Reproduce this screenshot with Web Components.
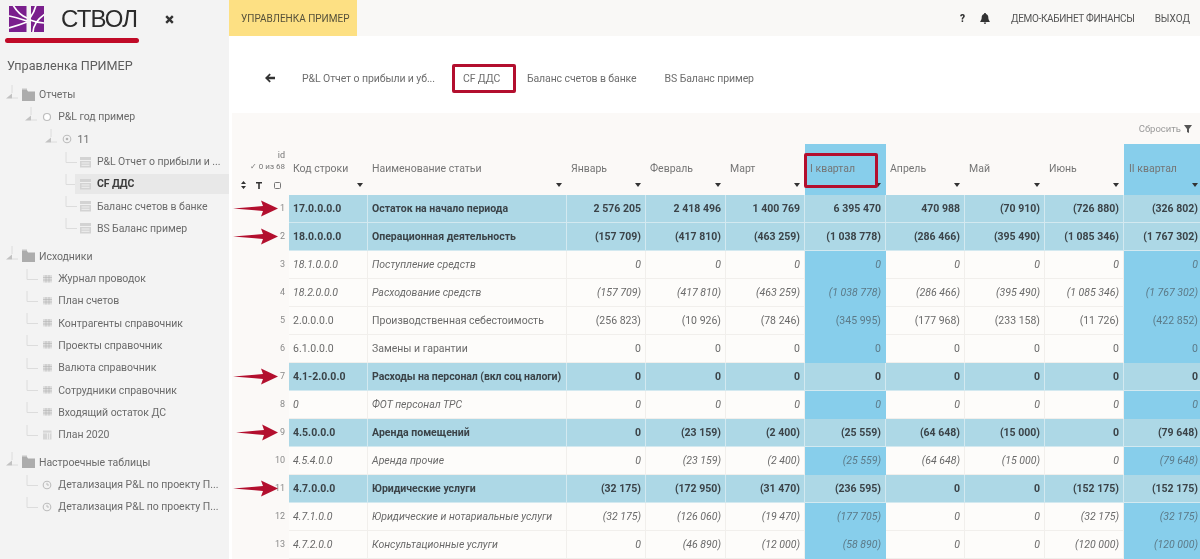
<!DOCTYPE html>
<html lang="ru">
<head>
<meta charset="UTF-8">
<title>СТВОЛ</title>
<style>
  html, body { margin: 0; height: 559px; overflow: hidden; background: #fff; }
  body { display: flex; font-family: Roboto, "Liberation Sans", sans-serif; filter: blur(.35px); }
  main { flex: 1; display: flex; flex-direction: column; min-width: 0; }
</style>
</head>
<body>
<app-sidebar title-text="Управленка ПРИМЕР">
  <tree-node label="Отчеты" icon="folder" level="0">
    <tree-node label="P&amp;L год пример" icon="circle" level="1">
      <tree-node label="11" icon="target" level="2">
        <tree-node label="P&amp;L Отчет о прибыли и ..." icon="report" level="3" leaf></tree-node>
        <tree-node label="CF ДДС" icon="report" level="3" leaf selected></tree-node>
        <tree-node label="Баланс счетов в банке" icon="report" level="3" leaf></tree-node>
        <tree-node label="BS Баланс пример" icon="report" level="3" leaf></tree-node>
      </tree-node>
    </tree-node>
  </tree-node>
  <tree-node label="Исходники" icon="folder" level="0">
    <tree-node label="Журнал проводок" icon="grid" level="1" leaf></tree-node>
    <tree-node label="План счетов" icon="grid" level="1" leaf></tree-node>
    <tree-node label="Контрагенты справочник" icon="grid" level="1" leaf></tree-node>
    <tree-node label="Проекты справочник" icon="grid" level="1" leaf></tree-node>
    <tree-node label="Валюта справочник" icon="grid" level="1" leaf></tree-node>
    <tree-node label="Сотрудники справочник" icon="grid" level="1" leaf></tree-node>
    <tree-node label="Входящий остаток ДС" icon="grid" level="1" leaf></tree-node>
    <tree-node label="План 2020" icon="plan" level="1" leaf></tree-node>
  </tree-node>
  <tree-node label="Настроечные таблицы" icon="folder" level="0">
    <tree-node label="Детализация P&amp;L по проекту П..." icon="clock" level="1" leaf></tree-node>
    <tree-node label="Детализация P&amp;L по проекту П..." icon="clock" level="1" leaf></tree-node>
  </tree-node>
</app-sidebar>
<main>
  <top-bar label="УПРАВЛЕНКА ПРИМЕР" user="ДЕМО-КАБИНЕТ ФИНАНСЫ" logout="ВЫХОД"></top-bar>
  <report-tabs>
    <tab-link>P&amp;L Отчет о прибыли и уб...</tab-link>
    <tab-link active>CF ДДС</tab-link>
    <tab-link>Баланс счетов в банке</tab-link>
    <tab-link>BS Баланс пример</tab-link>
  </report-tabs>
  <report-table></report-table>
</main>

<script>
  const ICONS = {
    folder: '<path d="M0 3h5l1 1.500h7V14H0z" fill="#acacac"/><path d="M0 1.500h5V3H0z" fill="#c4c4c4"/>',
    circle: '<circle cx="6" cy="8" r="3.500" fill="#fff" stroke="#bdbdbd" stroke-width="1.200"/>',
    target: '<circle cx="6" cy="8" r="3.800" fill="none" stroke="#bdbdbd" stroke-width="1.100"/><circle cx="6" cy="8" r="1.300" fill="#b5b5b5"/>',
    clock: '<circle cx="6" cy="8" r="3.800" fill="none" stroke="#bdbdbd" stroke-width="1.100"/><path d="M6 5.800V8h2" fill="none" stroke="#bdbdbd"/>',
    report: '<rect x="0" y="3" width="11" height="10.500" fill="#d3d3d3"/><path d="M0 6.500h11M1.500 9h8M1.500 11.300h8" stroke="#f3f3f3" stroke-width=".9"/>',
    grid: '<rect x="2" y="4" width="9" height="7.500" fill="#dedede"/><path d="M2 6.500h9M2 9h9M5 4v7.500M8 4v7.500" stroke="#b4b4b4" stroke-width=".6"/>',
    plan: '<rect x="2" y="3.500" width="8.500" height="9" fill="#d6d6d6"/><path d="M2 6h8.500M6.500 6v6.500M8.500 6v6.500" stroke="#f3f3f3" stroke-width=".7"/>'
  };

  class AppSidebar extends HTMLElement {
    constructor() {
      super();
      this.attachShadow({mode: 'open'}).innerHTML = `
        <style>
          :host { display: block; width: 229px; flex: none; height: 559px; background: #f3f3f3; color: #6b6b6b; overflow: hidden; }
          .brand { display: flex; align-items: center; height: 38px; padding-left: 9px; position: relative; }
          .brand svg.logo { flex: none; }
          .name { font: 24px "Liberation Sans", sans-serif; color: #2b2b2b; margin-left: 17px; letter-spacing: -.9px; }
          .close { margin-left: 28px; }
          .line { height: 5px; width: 134px; margin-left: 5px; background: #c00a27; border-radius: 3px; }
          h2 { font: 400 12.600px Roboto, sans-serif; margin: 14px 0 0 7px; height: 26.500px; line-height: 18px; color: #5d5d5d; }
        </style>
        <div class="brand">
          <svg class="logo" width="35" height="26" viewBox="0 0 35 26">
            <rect x="0" y="0" width="17.500" height="26" fill="#7a1f8d"/>
            <rect x="22" y="0" width="13" height="26" fill="#7a1f8d"/>
            <path d="M4 -1C8 6 13 10 18 12M0 10C6 11 12 13 18 15M0 22C7 20 13 18 18 16M24 27C24 20 27 14 36 8M21 14C26 16 31 17 36 17M27 -1C26 4 24 8 21 12" fill="none" stroke="#fff" stroke-width="1.700"/>
          </svg>
          <span class="name">СТВОЛ</span>
          <svg class="close" width="9" height="9" viewBox="0 0 9 9"><path d="M1.200 1.200l6.600 6.600M7.800 1.200L1.200 7.800" stroke="#333" stroke-width="2.400"/></svg>
        </div>
        <div class="line"></div>
        <h2>${this.getAttribute('title-text')}</h2>
        <slot></slot>`;
    }
  }

  class TreeNode extends HTMLElement {
    constructor() {
      super();
      const level = +this.getAttribute('level');
      const leaf = this.hasAttribute('leaf');
      const sel = this.hasAttribute('selected');
      const conn = leaf
        ? '<path d="M5 0v10.500h11" fill="none" stroke="#dcdcdc"/>'
        : '<path d="M9 0v8" stroke="#dcdcdc" fill="none"/><path d="M3 13.500h6v-5z" fill="#c2c2c2"/><path d="M9 13h6" stroke="#dcdcdc"/>';
      this.attachShadow({mode: 'open'}).innerHTML = `
        <style>
          :host { display: block; font: 10.500px Roboto, sans-serif; letter-spacing: -.05px; color: #6b6b6b; }
          :host([level="0"]) { margin-bottom: 5.500px; }
          .row { display: flex; align-items: center; height: 22.300px; }
          .gutter { flex: none; width: ${3 + 19.300 * level}px; }
          .conn { flex: none; width: 17px; height: 20px; }
          .body { flex: 1; min-width: 0; display: flex; align-items: center; height: 20px; }
          .body svg { flex: none; margin-left: 2px; width: 17px; height: 16px; }
          .sel { background: #e8e8e8; color: #3c3c3c; font-weight: 700; margin-left: -3px; padding-left: 3px; }
          span { white-space: nowrap; }
        </style>
        <div class="row">
          <div class="gutter"></div>
          <svg class="conn" viewBox="0 0 17 20">${conn}</svg>
          <div class="body ${sel ? 'sel' : ''}">
            <svg viewBox="0 0 17 16">${ICONS[this.getAttribute('icon')]}</svg>
            <span>${this.getAttribute('label').replace('&', '&amp;')}</span>
          </div>
        </div>
        <slot></slot>`;
    }
  }

  class TopBar extends HTMLElement {
    constructor() {
      super();
      this.attachShadow({mode: 'open'}).innerHTML = `
        <style>
          :host { display: flex; align-items: center; height: 36px; flex: none; background: #f9f8f6; font: 10px Roboto, sans-serif; color: #555; }
          .crumb { align-self: stretch; display: flex; align-items: center; width: 128px; padding-left: 12px; box-sizing: border-box; background: #fde083; color: #55503a; }
          .right { margin-left: auto; display: flex; align-items: center; padding-right: 10px; }
          .q { font-weight: 900; font-size: 10px; color: #333; }
          svg { margin-left: 15px; }
          .user { margin-left: 21px; letter-spacing: -.32px; }
          .out { margin-left: 20px; }
        </style>
        <div class="crumb">${this.getAttribute('label')}</div>
        <div class="right">
          <span class="q">?</span>
          <svg width="10" height="11" viewBox="0 0 10 11"><path d="M5 0c.7 0 1 .4 1 1 1.500.4 2.300 1.700 2.300 3.300 0 2 .5 3 1.400 3.900v.8H.3v-.8C1.200 7.300 1.700 6.300 1.700 4.300 1.700 2.700 2.500 1.400 4 1c0-.6.300-1 1-1zM3.800 9.500h2.400c0 .9-.5 1.400-1.200 1.400s-1.200-.5-1.200-1.400z" fill="#333"/></svg>
          <span class="user">${this.getAttribute('user')}</span>
          <span class="out">${this.getAttribute('logout')}</span>
        </div>`;
    }
  }

  class ReportTabs extends HTMLElement {
    constructor() {
      super();
      this.attachShadow({mode: 'open'}).innerHTML = `
        <style>
          :host { display: flex; align-items: center; flex: none; height: 77px; padding: 7px 0 0 36px; box-sizing: border-box; background: #fff; }
          svg { margin-right: 16px; }
        </style>
        <svg width="10" height="10" viewBox="0 0 11 10"><path d="M5 0l1.400 1.400L4 3.700h7v2.600H4l2.400 2.300L5 10 0 5z" fill="#333"/></svg>
        <slot></slot>`;
    }
  }

  class TabLink extends HTMLElement {
    constructor() {
      super();
      this.attachShadow({mode: 'open'}).innerHTML = `
        <style>
          :host { display: block; font: 10.500px Roboto, sans-serif; letter-spacing: -.1px; color: #6e6e6e; padding: 0 11px; height: 29px; line-height: 29px; box-sizing: border-box; white-space: nowrap; margin-right: 6px; }
          :host([active]) { border: 3px solid #b30f2e; border-radius: 2px; line-height: 23px; padding: 0 8px; width: 64px; margin: 0; }
        </style>
        <slot></slot>`;
    }
  }

  const COLS = ['Январь', 'Февраль', 'Март', 'I квартал', 'Апрель', 'Май', 'Июнь', 'II квартал'];
  const Q = [3, 7];
  const ROWS = [
    [1, 'b', '17.0.0.0.0', 'Остаток на начало периода', '2 576 205', '2 418 496', '1 400 769', '6 395 470', '470 988', '(70 910)', '(726 880)', '(326 802)'],
    [2, 'b', '18.0.0.0.0', 'Операционная деятельность', '(157 709)', '(417 810)', '(463 259)', '(1 038 778)', '(286 466)', '(395 490)', '(1 085 346)', '(1 767 302)'],
    [3, 'i', '18.1.0.0.0', 'Поступление средств', '0', '0', '0', '0', '0', '0', '0', '0'],
    [4, 'i', '18.2.0.0.0', 'Расходование средств', '(157 709)', '(417 810)', '(463 259)', '(1 038 778)', '(286 466)', '(395 490)', '(1 085 346)', '(1 767 302)'],
    [5, 'n', '2.0.0.0.0', 'Производственная себестоимость', '(256 823)', '(10 926)', '(78 246)', '(345 995)', '(177 968)', '(233 158)', '(11 726)', '(422 852)'],
    [6, 'n', '6.1.0.0.0', 'Замены и гарантии', '0', '0', '0', '0', '0', '0', '0', '0'],
    [7, 'b', '4.1-2.0.0.0', 'Расходы на персонал (вкл соц налоги)', '0', '0', '0', '0', '0', '0', '0', '0'],
    [8, 'i', '0', 'ФОТ персонал ТРС', '0', '0', '0', '0', '0', '0', '0', '0'],
    [9, 'b', '4.5.0.0.0', 'Аренда помещений', '0', '(23 159)', '(2 400)', '(25 559)', '(64 648)', '(15 000)', '0', '(79 648)'],
    [10, 'i', '4.5.4.0.0', 'Аренда прочие', '0', '(23 159)', '(2 400)', '(25 559)', '(64 648)', '(15 000)', '0', '(79 648)'],
    [11, 'b', '4.7.0.0.0', 'Юридические услуги', '(32 175)', '(172 950)', '(31 470)', '(236 595)', '0', '0', '(152 175)', '(152 175)'],
    [12, 'i', '4.7.1.0.0', 'Юридические и нотариальные услуги', '(32 175)', '(126 060)', '(19 470)', '(177 705)', '0', '0', '(32 175)', '(32 175)'],
    [13, 'i', '4.7.2.0.0', 'Консультационные услуги', '0', '(46 890)', '(12 000)', '(58 890)', '0', '0', '(120 000)', '(120 000)']
  ];
  const ARROWS = [[1, 0], [2, 0], [7, 0], [9, 3], [11, 0]];

  class ReportTable extends HTMLElement {
    constructor() {
      super();
      const caret = '<svg class="caret" width="6" height="4" viewBox="0 0 6 4"><path d="M0 0h6L3 4z" fill="#333"/></svg>';
      const head = COLS.map((c, i) => `
        <div class="th ${Q.includes(i) ? 'q' : ''}">
          <span>${c}</span>${caret}
          ${i === 3 ? '<div class="mark"></div>' : ''}
        </div>`).join('');
      const body = ROWS.map(r => {
        const [id, kind, code, name, ...vals] = r;
        const cells = vals.map((v, i) =>
          `<div class="td num ${kind} ${Q.includes(i) && kind !== 'b' ? 'q' : ''}">${v}</div>`).join('');
        // the long bold name only just fits its column
        const tight = kind === 'b' && name.length > 30 ? 'tight' : '';
        return `<div class="rid">${id}</div><div class="td ${kind}">${code}</div><div class="td ${kind} ${tight}">${name}</div>${cells}`;
      }).join('');
      const arrows = ARROWS.map(([id, dx]) => {
        const y = 95 + (id - 1) * 28;
        return `<svg class="arrow" style="top:${y - 8}px;left:${1 + dx}px" width="${45 - dx}" height="17" viewBox="0 0 45 17" preserveAspectRatio="none">
          <path d="M0 8.500L30 6 28 0.500 45 8.500 28 16.500 30 11z" fill="#b30f2e"/></svg>`;
      }).join('');
      this.attachShadow({mode: 'open'}).innerHTML = `
        <style>
          :host { display: block; position: relative; flex: 1; margin-left: 3px; background: #fbf9f7; font: 10.500px Roboto, sans-serif; color: #666; overflow: hidden; }
          .reset { display: flex; justify-content: flex-end; align-items: center; gap: 3px; height: 31px; padding-right: 8px; font-size: 9.500px; color: #9a9a9a; }
          .grid { display: grid; grid-template-columns: 57px 79px 199px 79px 80px 79px 81px 79px 80px 79px 79px; grid-template-rows: 51px; grid-auto-rows: 28px; }
          .th { position: relative; height: 51px; padding: 18px 0 0 4px; box-sizing: border-box; line-height: 13px; color: #757575; }
          .th.q { background: #87ceeb; padding-left: 5px; }
          .caret { position: absolute; right: 5px; bottom: 8px; }
          .mark { position: absolute; left: -1px; top: 9px; width: 74px; height: 35px; box-sizing: border-box; border: 3px solid #b30f2e; border-radius: 2px; }
          .idh { position: relative; height: 51px; text-align: right; padding-right: 4px; box-sizing: border-box; color: #777; }
          .idh div { font-size: 9px; line-height: 11px; }
          .idh .t { padding-top: 6px; }
          .idh .tools { position: absolute; left: 9px; bottom: 6px; display: flex; align-items: center; }
          .rid { text-align: right; padding-right: 4px; line-height: 27px; font-size: 9px; color: #8a8a8a; }
          .td { padding: 0 4px; line-height: 27px; white-space: nowrap; overflow: hidden; background: #fdfcfa; border-right: 1px solid #f1efec; border-bottom: 1px solid #f1efec; box-sizing: border-box; color: #6a6a6a; }
          .num { text-align: right; }
          .i { font-style: italic; }
          .b { background: #add8e6; font-weight: 700; color: #3b4348; border-color: #d3e9f0; }
          .td.tight { letter-spacing: -.07px; }
          .td.q { background: #87ceeb; border-color: #87ceeb; color: #5c7a88; }
          .arrow { position: absolute; }
        </style>
        <div class="reset"><span>Сбросить</span>
          <svg width="8" height="8" viewBox="0 0 8 8"><path d="M0 0h8L5 4v4L3 7V4z" fill="#555"/></svg></div>
        <div class="grid">
          <div class="idh">
            <div class="t">id</div>
            <div style="font-size:8px">✓ 0 из 68</div>
            <div class="tools">
              <svg width="5" height="8" viewBox="0 0 5 8"><path d="M2.500 0L5 3H0zM2.500 8L0 5h5z" fill="#333"/></svg>
              <svg style="margin-left:10px" width="6" height="7" viewBox="0 0 6 7"><path d="M0 0h6v1.500H3.800V7H2.200V1.500H0z" fill="#333"/></svg>
              <svg style="margin-left:12px" width="7" height="7" viewBox="0 0 7 7"><rect x=".5" y=".5" width="6" height="6" rx="1" fill="none" stroke="#777"/></svg>
            </div>
          </div>
          <div class="th"><span>Код строки</span>${caret}</div>
          <div class="th"><span>Наименование статьи</span>${caret}</div>
          ${head}
          ${body}
        </div>
        ${arrows}`;
    }
  }

  customElements.define('app-sidebar', AppSidebar);
  customElements.define('tree-node', TreeNode);
  customElements.define('top-bar', TopBar);
  customElements.define('report-tabs', ReportTabs);
  customElements.define('tab-link', TabLink);
  customElements.define('report-table', ReportTable);
</script>
</body>
</html>
